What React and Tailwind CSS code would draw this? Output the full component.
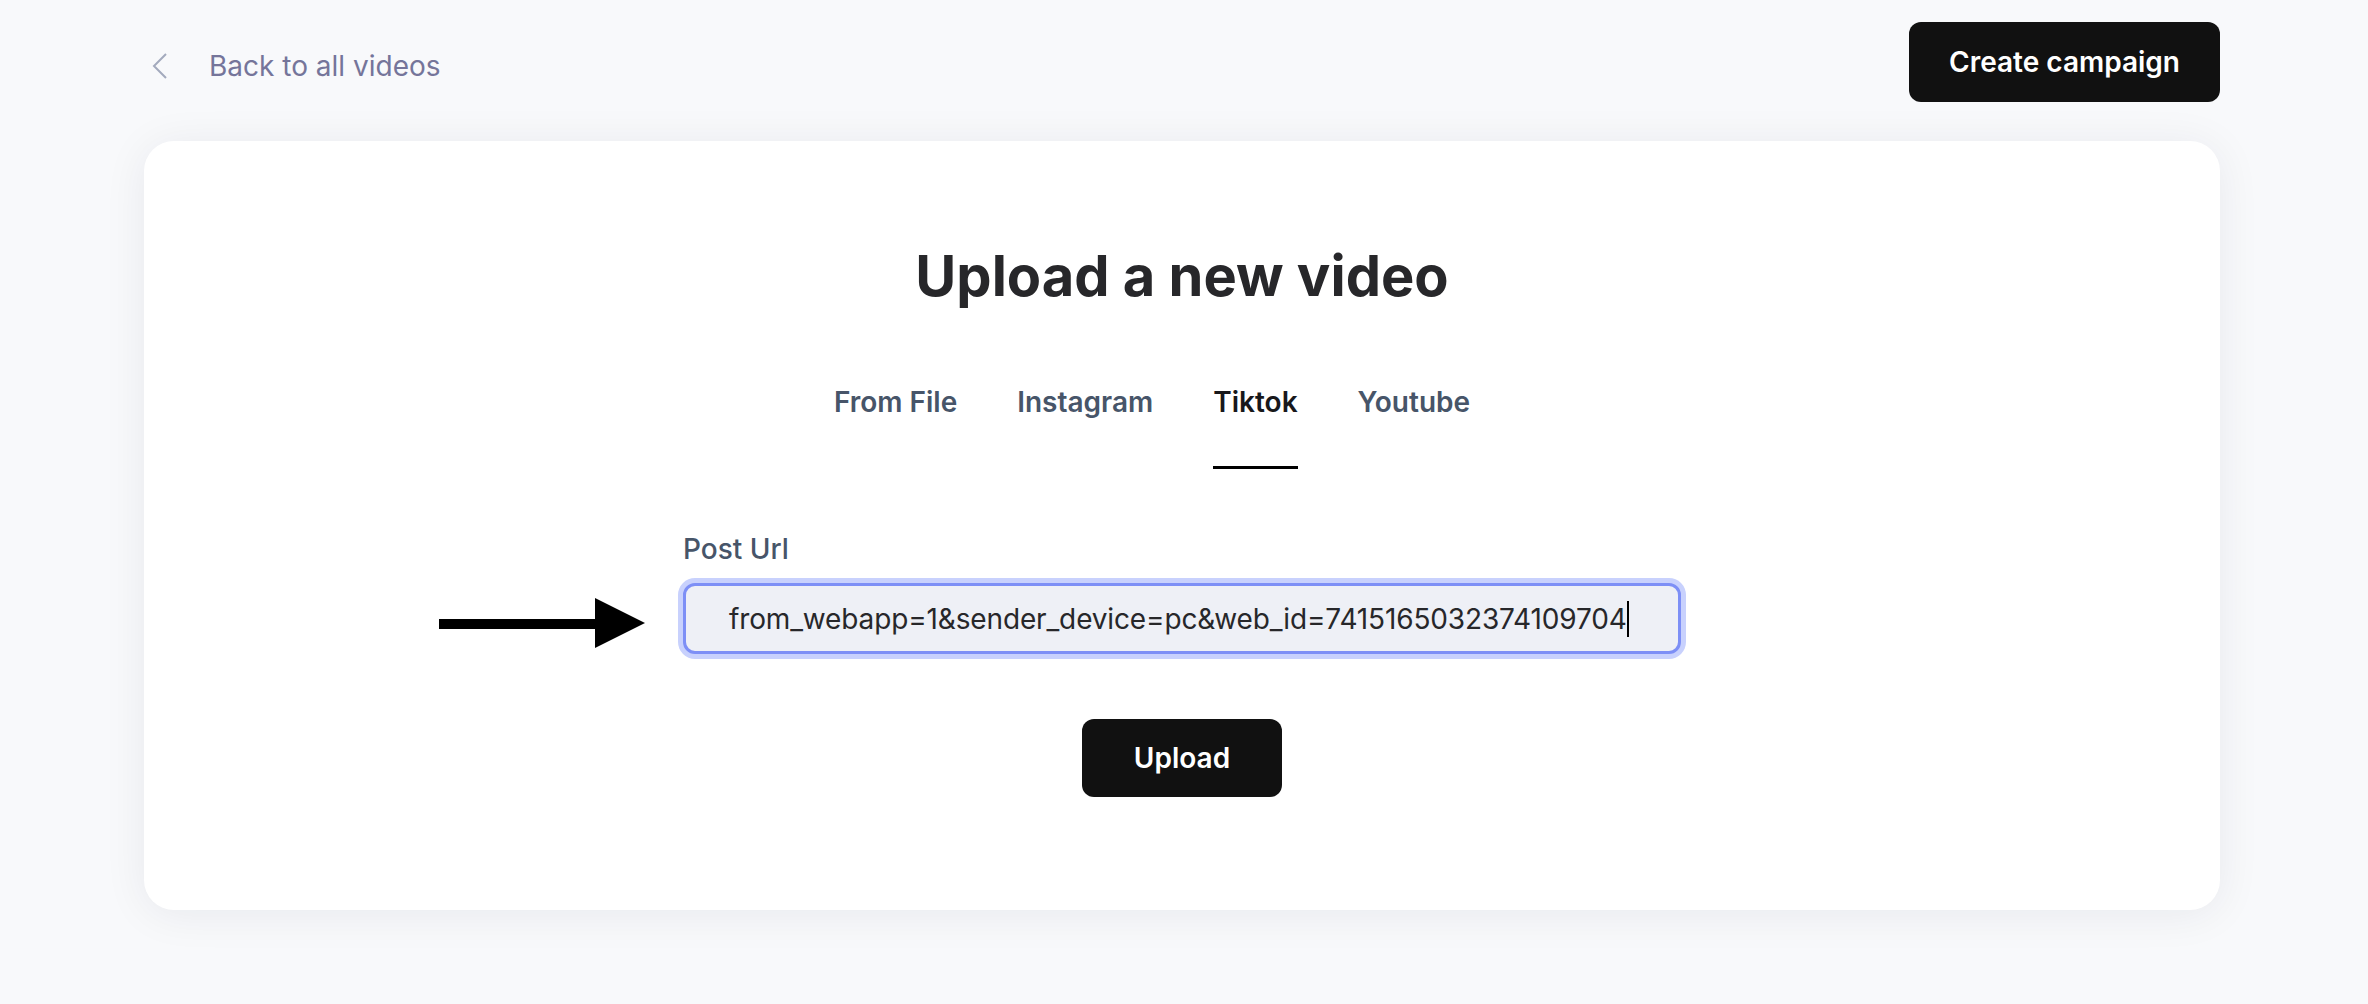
import React from 'react';

const tabs = ['From File', 'Instagram', 'Tiktok', 'Youtube'];

function Arrow() {
  return (
    <svg width="206" height="52" viewBox="0 0 206 52" className="absolute right-full mr-[38px] top-[15px]">
      <rect x="0" y="21" width="158" height="10" fill="#000" />
      <polygon points="156,0 206,25 156,50" fill="#000" />
    </svg>
  );
}

export default function App() {
  const active = 'Tiktok';

  return (
    <main className="min-h-screen bg-[#f8f9fb] font-['Inter',sans-serif]">
      <div className="w-[2076px] ml-[144px] pt-[22px]">
        {/* top bar */}
        <div className="flex items-center justify-between h-[80px]">
          <button className="flex items-center gap-[41px] pl-[8px] pt-[7px] text-[28px] text-[#75759a]">
            <svg width="16" height="26" viewBox="0 0 16 26" fill="none">
              <path d="M14 1L2 13L14 25" stroke="#a3aabd" strokeWidth="2" />
            </svg>
            <span>Back to all videos</span>
          </button>
          <button className="h-[80px] w-[311px] rounded-[12px] bg-[#111111] text-white text-[28px] font-semibold">
            Create campaign
          </button>
        </div>

        {/* card */}
        <div className="mt-[39px] bg-white rounded-[30px] shadow-[0_4px_44px_rgba(20,30,60,0.07)] pt-[101px] pb-[113px] flex flex-col items-center">
          <h1 className="text-[56px] leading-[68px] font-bold text-[#27272a]">Upload a new video</h1>

          <div className="mt-[74px] flex gap-[60px] pr-[60px]">
            {tabs.map(t => (
              <div
                key={t}
                className={
                  t === active
                    ? 'pb-[46px] border-b-[3px] border-black text-[28px] leading-[36px] font-semibold text-[#18181b]'
                    : 'pb-[46px] border-b-[3px] border-transparent text-[28px] leading-[36px] font-semibold text-[#475569]'
                }
              >
                {t}
              </div>
            ))}
          </div>

          <div className="mt-[62px] w-[998px]">
            <label className="block text-[28px] leading-[36px] font-medium text-[#475569]">Post Url</label>
            <div className="relative mt-[16px]">
              <Arrow />
              <div className="h-[71px] rounded-[12px] border-[3px] border-[#7d8ff6] ring-[5px] ring-[#c8d1fd] bg-[#eef0f6] pl-[43px] flex items-center overflow-hidden">
                <span className="text-[28px] text-[#27272a] whitespace-nowrap tracking-[-0.005em]">from_webapp=1&amp;sender_device=pc&amp;web_id=7415165032374109704</span>
                <span className="inline-block w-[2px] h-[36px] bg-black" />
              </div>
            </div>
          </div>

          <button className="mt-[65px] h-[78px] w-[200px] rounded-[12px] bg-[#111111] text-white text-[28px] font-semibold">
            Upload
          </button>
        </div>
      </div>
    </main>
  );
}
